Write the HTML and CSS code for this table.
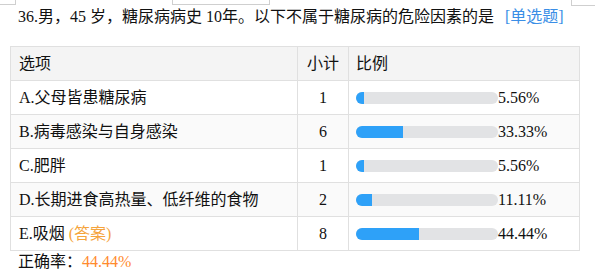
FILE: index.html
```html
<!DOCTYPE html>
<html lang="zh-CN">
<head>
<meta charset="utf-8">
<title>糖尿病题目统计</title>
<link rel="stylesheet" href="styles.css">
</head>
<body>
<div class="page">
  <div class="topbar">
    <div class="tb-box tb-left"></div>
    <div class="tb-box tb-mid"></div>
    <div class="tb-box tb-right"></div>
  </div>
  <div class="title">36.男，45 岁，糖尿病病史 10年。以下不属于糖尿病的危险因素的是<span class="qtype">[单选题]</span></div>
  <table class="stats">
    <colgroup>
      <col class="c-opt">
      <col class="c-cnt">
      <col class="c-pct">
    </colgroup>
    <thead>
      <tr><th class="opt">选项</th><th class="cnt">小计</th><th class="pct">比例</th></tr>
    </thead>
    <tbody>
      <tr><td class="opt">A.父母皆患糖尿病</td><td class="cnt">1</td><td class="pct"><span class="bar"><span class="fill" style="width:5.56%"></span></span>5.56%</td></tr>
      <tr class="alt"><td class="opt">B.病毒感染与自身感染</td><td class="cnt">6</td><td class="pct"><span class="bar"><span class="fill" style="width:33.33%"></span></span>33.33%</td></tr>
      <tr><td class="opt">C.肥胖</td><td class="cnt">1</td><td class="pct"><span class="bar"><span class="fill" style="width:5.56%"></span></span>5.56%</td></tr>
      <tr class="alt"><td class="opt">D.长期进食高热量、低纤维的食物</td><td class="cnt">2</td><td class="pct"><span class="bar"><span class="fill" style="width:11.11%"></span></span>11.11%</td></tr>
      <tr><td class="opt">E.吸烟 <span class="answer">(答案)</span></td><td class="cnt">8</td><td class="pct"><span class="bar"><span class="fill" style="width:44.44%"></span></span>44.44%</td></tr>
    </tbody>
  </table>
  <div class="accuracy">正确率：<span class="rate">44.44%</span></div>
</div>
</body>
</html>
```

FILE: styles.css
```css
html, body {
  margin: 0;
  padding: 0;
  background: #ffffff;
}
body {
  font-family: "Liberation Serif", "Noto Sans CJK SC", serif;
  font-size: 16px;
  color: #111111;
}
.page {
  padding: 0 0 0 10px;
}
.topbar {
  display: flex;
  align-items: flex-start;
  height: 6px;
  margin-left: -10px;
}
.tb-box {
  box-sizing: border-box;
  border: 1px solid #cfcfcf;
  border-top: none;
  flex: none;
}
.tb-left {
  width: 16px;
  height: 5px;
  border-left: none;
}
.tb-mid {
  margin-left: 156px;
  width: 98px;
  height: 5px;
}
.tb-right {
  margin-left: 301px;
  width: 30px;
  height: 6px;
  border-right: none;
}
.title {
  padding-left: 8px;
  line-height: 21px;
  margin-bottom: 19px;
  white-space: nowrap;
}
.qtype {
  color: #3a8ee6;
  margin-left: 11px;
}
.stats {
  border-collapse: collapse;
  width: 570px;
  table-layout: fixed;
}
.c-opt { width: 287px; }
.c-cnt { width: 51px; }
.stats th,
.stats td {
  border: 1px solid #e0e0e0;
  padding: 0 8px;
  line-height: 33px;
  height: 33px;
  font-weight: normal;
  text-align: left;
  white-space: nowrap;
}
.stats thead tr {
  background: #f4f4f4;
}
.stats tr.alt {
  background: #fafafa;
}
.stats .cnt {
  text-align: center;
  padding: 0;
}
.stats th.cnt {
  text-align: center;
}
.stats .pct {
  padding-left: 7px;
}
.bar {
  display: inline-block;
  vertical-align: middle;
  width: 142px;
  height: 12px;
  border-radius: 6px;
  background: #e2e3e5;
  overflow: hidden;
  margin-top: -3px;
}
.fill {
  display: block;
  height: 100%;
  background: #2ea1f8;
}
.answer {
  color: #f5a43c;
}
.accuracy {
  padding-left: 8px;
  line-height: 21px;
}
.rate {
  color: #ff8a2e;
}
```
